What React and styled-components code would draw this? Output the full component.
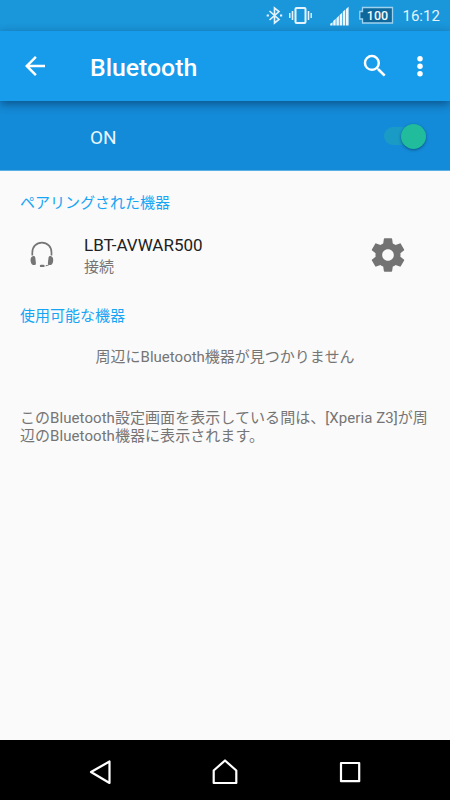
import React from "react";
import styled, { createGlobalStyle } from "styled-components";

const GlobalStyle = createGlobalStyle`
  * { box-sizing: border-box; }
  body {
    margin: 0;
    background: #fafafa;
    font-family: Roboto, "Noto Sans CJK JP", sans-serif;
  }
  svg { display: block; flex: none; }
`;

const Screen = styled.div`
  display: flex;
  flex-direction: column;
  width: 450px;
  height: 800px;
  overflow: hidden;
  background: #fafafa;
`;

const StatusBar = styled.header`
  display: flex;
  justify-content: flex-end;
  height: 31px;
  background: #1a96da;
`;

const Clock = styled.time`
  width: 47.5px;
  padding-top: 1px;
  color: #e5f3fc;
  font-size: 15px;
  line-height: 31px;
`;

const Toolbar = styled.div`
  display: flex;
  align-items: center;
  height: 70px;
  padding: 0 15px 0 20px;
  background: #169ceb;
  color: #fff;
  z-index: 1;
  box-shadow: 0 3px 9px rgba(0, 20, 50, 0.48);
`;

const Title = styled.h1`
  flex: 1;
  margin: 0 0 0 40px;
  padding-top: 3px;
  font-size: 24.8px;
  font-weight: 500;
  line-height: 30px;
`;

const IconButton = styled.button`
  display: block;
  padding: 0;
  margin: 0 0 0 ${(p) => p.$gap || 0}px;
  border: 0;
  background: none;
  color: ${(p) => p.$color || "#fff"};
`;

const SwitchBar = styled.div`
  display: flex;
  align-items: center;
  justify-content: space-between;
  height: 70px;
  padding: 1px 24px 0 90px;
  border-bottom: 1px solid #5cafe4;
  background: #148bd8;
`;

const SwitchLabel = styled.span`
  padding-top: 3px;
  color: #e9f6ff;
  font-size: 19px;
  line-height: 24px;
`;

const Track = styled.div`
  display: flex;
  align-items: center;
  justify-content: flex-end;
  width: 42px;
  height: 18px;
  border-radius: 9px;
  background: #199bc6;
`;

const Thumb = styled.div`
  flex: none;
  width: 25px;
  height: 25px;
  border-radius: 50%;
  background: #20bc9c;
  box-shadow: 0 1px 3px rgba(0, 30, 60, 0.5);
`;

const Content = styled.main`
  flex: 1;
  padding: 21px 20px 0;
`;

const SectionTitle = styled.h2`
  margin: 0;
  color: #16a5f5;
  font-size: 15px;
  font-weight: 400;
  line-height: 22px;
`;

const DeviceRow = styled.div`
  display: flex;
  align-items: center;
  height: 91px;
  padding: 0 22px 10px 9px;
`;

const DeviceText = styled.div`
  flex: 1;
  margin: 4px 0 0 29px;
`;

const DeviceName = styled.div`
  color: #212121;
  font-size: 17px;
  line-height: 21px;
`;

const Note = styled.p`
  margin: ${(p) => p.$top}px 0 0;
  color: #757575;
  font-size: 15px;
  line-height: ${(p) => p.$line || 22}px;
  letter-spacing: ${(p) => p.$spacing || 0}px;
  text-align: ${(p) => (p.$centered ? "center" : "left")};
  white-space: nowrap;
`;

const NavBar = styled.nav`
  display: flex;
  align-items: center;
  justify-content: space-between;
  height: 60px;
  padding: 3px 80px 0;
  background: #000;
`;

const StatusIcons = () => (
  <svg width="145" height="31" viewBox="258 0 145 31" fill="none">
    <path d="M269.5 11 279 19.5 274.5 23V8L279 11.5 269.5 20" stroke="#e5f3fc" strokeWidth="1.6" />
    <path d="M266.7 15.5h2.2M280 15.5h2.2" stroke="#e5f3fc" strokeWidth="2.2" />
    <rect x="295.5" y="8" width="10" height="15" rx="1" stroke="#e5f3fc" strokeWidth="2" />
    <path d="M292.5 11v9M308.5 11v9" stroke="#e5f3fc" strokeWidth="1.6" />
    <path d="M289.8 13v5M311.2 13v5" stroke="#e5f3fc" strokeWidth="1.4" />
    <path
      d="M330.2 25.5v-1.700l2.400-1.500V25.500zM333.200 25.500v-4.500l2.500-2.200V25.500zM336.400 25.500v-7.300l2.500-2.400V25.500zM339.600 25.500V15l2.500-2.300V25.500zM342.800 25.500V11.800l2.500-2.300V25.500zM346 25.500V8.900l2.600-2.200V25.500z"
      fill="#eef8ff"
    />
    <path d="M362.500 7.500h30v15.500h-30v-4h-2.700v-7.500h2.700z" fill="#0f689c" stroke="#9fd2ef" strokeWidth="1.300" />
    <text x="377.500" y="20" textAnchor="middle" fill="#f5fbff" fontSize="12.500" fontWeight="500">100</text>
  </svg>
);

const BackArrow = () => (
  <svg width="30" height="30" viewBox="0 0 24 24" fill="currentColor">
    <path d="M20 11H7.830l5.590-5.590L12 4l-8 8 8 8 1.410-1.410L7.830 13H20v-2z" />
  </svg>
);

const SearchIcon = () => (
  <svg width="30" height="30" viewBox="0 0 24 24" fill="currentColor">
    <path d="M15.500 14h-.79l-.28-.27A6.471 6.471 0 0 0 16 9.500 6.500 6.500 0 1 0 9.500 16c1.610 0 3.090-.59 4.230-1.570l.27.28v.79l5 4.990L20.490 19l-4.990-5zm-6 0C7.010 14 5 11.990 5 9.500S7.010 5 9.500 5 14 7.010 14 9.500 11.990 14 9.500 14z" />
  </svg>
);

const MoreIcon = () => (
  <svg width="30" height="30" viewBox="0 0 24 24" fill="currentColor">
    <circle cx="12" cy="6.200" r="2.200" />
    <circle cx="12" cy="12.200" r="2.200" />
    <circle cx="12" cy="18.200" r="2.200" />
  </svg>
);

const HeadsetIcon = () => (
  <svg width="26" height="28" viewBox="0 0 26 28" fill="none">
    <path d="M3.300 14.500V11.500C3.300 5.800 7.400 1.700 12.900 1.700s9.600 4.100 9.600 9.800v3" stroke="#757575" strokeWidth="1.700" />
    <path d="M3.600 15.200c1.400-.5 2.500 0 2.700 1.500l.6 5.200c.1 1.500-.5 2.200-1.800 2.200-1.500 0-2.800-1.100-3.300-3.200-.6-2.900 0-5 1.800-5.700zM22.200 15.200c-1.400-.5-2.500 0-2.700 1.500l-.6 5.200c-.1 1.500.5 2.200 1.800 2.200 1.500 0 2.800-1.100 3.300-3.200.6-2.900 0-5-1.800-5.700z" fill="#757575" />
    <path d="M20.500 23.300c-1 .9-2.200 1.300-3.800 1.500" stroke="#757575" strokeWidth="1" />
    <rect x="10.800" y="23.700" width="4.800" height="2.400" rx="1.200" fill="#757575" />
  </svg>
);

const GearIcon = () => (
  <svg width="40" height="40" viewBox="0 0 24 24" fill="currentColor">
    <path d="M19.430 12.980c.04-.32.07-.64.07-.98s-.03-.66-.07-.98l2.110-1.650c.19-.15.24-.42.12-.64l-2-3.460c-.12-.22-.39-.3-.61-.22l-2.490 1c-.52-.4-1.080-.73-1.690-.98l-.38-2.650A.488.488 0 0 0 14 2h-4c-.25 0-.46.18-.49.42l-.38 2.650c-.61.25-1.170.59-1.690.98l-2.490-1c-.23-.09-.49 0-.61.22l-2 3.460c-.13.22-.07.49.12.64l2.110 1.650c-.04.32-.07.65-.07.98s.03.66.07.98l-2.110 1.650c-.19.15-.24.42-.12.64l2 3.460c.12.22.39.3.61.22l2.490-1c.52.4 1.080.73 1.690.98l.38 2.650c.03.24.24.42.49.42h4c.25 0 .46-.18.49-.42l.38-2.650c.61-.25 1.170-.59 1.690-.98l2.490 1c.23.09.49 0 .61-.22l2-3.460c.12-.22.07-.49-.12-.64l-2.110-1.650zM12 15.500c-1.930 0-3.500-1.570-3.500-3.500s1.570-3.500 3.500-3.500 3.500 1.570 3.500 3.500-1.570 3.500-3.500 3.500z" />
  </svg>
);

const NavIcon = ({ d }) => (
  <svg width="40" height="40" viewBox="0 0 40 40" fill="none" stroke="#fff" strokeWidth="2.200" strokeLinejoin="round">
    <path d={d} />
  </svg>
);

export default function App() {
  return (
    <Screen>
      <GlobalStyle />
      <StatusBar>
        <StatusIcons />
        <Clock>16:12</Clock>
      </StatusBar>
      <Toolbar>
        <IconButton aria-label="戻る"><BackArrow /></IconButton>
        <Title>Bluetooth</Title>
        <IconButton aria-label="検索"><SearchIcon /></IconButton>
        <IconButton aria-label="メニュー" $gap={15}><MoreIcon /></IconButton>
      </Toolbar>
      <SwitchBar>
        <SwitchLabel>ON</SwitchLabel>
        <Track><Thumb /></Track>
      </SwitchBar>
      <Content>
        <SectionTitle>ペアリングされた機器</SectionTitle>
        <DeviceRow>
          <HeadsetIcon />
          <DeviceText>
            <DeviceName>LBT-AVWAR500</DeviceName>
            <Note $top={0}>接続</Note>
          </DeviceText>
          <IconButton aria-label="設定" $color="#737373"><GearIcon /></IconButton>
        </DeviceRow>
        <SectionTitle>使用可能な機器</SectionTitle>
        <Note $top={19} $centered>周辺にBluetooth機器が見つかりません</Note>
        <Note $top={41} $line={18} $spacing={0.06}>
          このBluetooth設定画面を表示している間は、[Xperia Z3]が周
          <br />
          辺のBluetooth機器に表示されます。
        </Note>
      </Content>
      <NavBar>
        <NavIcon d="M29.500 9.500v21.500L11 20z" />
        <NavIcon d="M20 8.500 31.300 18.500V31h-22.600V18.500z" />
        <NavIcon d="M11 11h18.200v18.200H11z" />
      </NavBar>
    </Screen>
  );
}
